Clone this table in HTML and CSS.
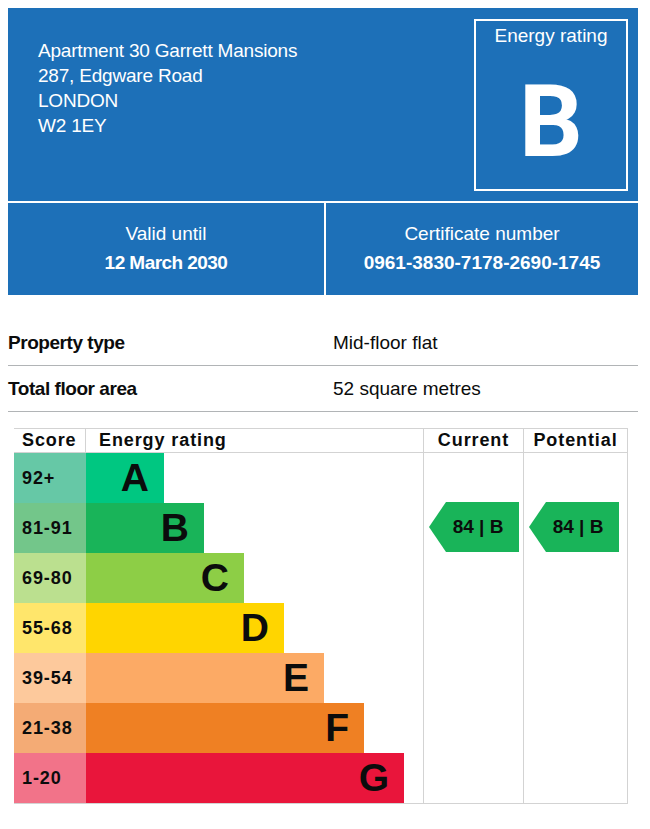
FILE: index.html
```html
<!DOCTYPE html>
<html lang="en">
<head>
<meta charset="utf-8">
<title>Energy performance certificate</title>
<link rel="stylesheet" href="styles.css">
</head>
<body>
<div class="page">
  <div class="summary">
    <div class="address">
      <div>Apartment 30 Garrett Mansions</div>
      <div>287, Edgware Road</div>
      <div>LONDON</div>
      <div>W2 1EY</div>
    </div>
    <div class="rating-box">
      <div class="rating-title">Energy rating</div>
      <div class="rating-letter">B</div>
    </div>
  </div>
  <div class="meta">
    <div class="meta-cell">
      <div class="meta-label">Valid until</div>
      <div class="meta-value date">12 March 2030</div>
    </div>
    <div class="meta-cell">
      <div class="meta-label">Certificate number</div>
      <div class="meta-value">0961-3830-7178-2690-1745</div>
    </div>
  </div>

  <dl class="props">
    <div class="prop-row">
      <dt>Property type</dt>
      <dd>Mid-floor flat</dd>
    </div>
    <div class="prop-row">
      <dt>Total floor area</dt>
      <dd>52 square metres</dd>
    </div>
  </dl>

  <div class="epc">
    <div class="epc-head">
      <div class="h h-score">Score</div>
      <div class="h h-rating">Energy rating</div>
      <div class="h h-cur">Current</div>
      <div class="h h-pot">Potential</div>
    </div>
    <div class="epc-body">
      <div class="bands">
        <div class="band band-a"><div class="score">92+</div><div class="bar" style="width:78px">A</div></div>
        <div class="band band-b"><div class="score">81-91</div><div class="bar" style="width:118px">B</div></div>
        <div class="band band-c"><div class="score">69-80</div><div class="bar" style="width:158px">C</div></div>
        <div class="band band-d"><div class="score">55-68</div><div class="bar" style="width:198px">D</div></div>
        <div class="band band-e"><div class="score">39-54</div><div class="bar" style="width:238px">E</div></div>
        <div class="band band-f"><div class="score">21-38</div><div class="bar" style="width:278px">F</div></div>
        <div class="band band-g"><div class="score">1-20</div><div class="bar" style="width:318px">G</div></div>
      </div>
      <div class="col col-cur">
        <div class="arrow row-b">84 | B</div>
      </div>
      <div class="col col-pot">
        <div class="arrow row-b">84 | B</div>
      </div>
    </div>
  </div>
</div>
</body>
</html>
```

FILE: styles.css
```css
* { box-sizing: border-box; }

html, body {
  margin: 0;
  padding: 0;
  background: #ffffff;
}

body {
  padding: 8px;
  font-family: "Liberation Sans", Arial, sans-serif;
  color: #0b0c0c;
}

.page {
  width: 630px;
}

/* ---------- summary header ---------- */
.summary {
  background: #1d70b8;
  color: #ffffff;
  height: 193px;
  display: flex;
  justify-content: space-between;
  align-items: flex-start;
  padding: 11px 10px 0 30px;
}

.address {
  margin-top: 19px;
  font-size: 19px;
  line-height: 25px;
  letter-spacing: -0.2px;
}

.rating-box {
  width: 154px;
  height: 172px;
  border: 2px solid #ffffff;
  display: flex;
  flex-direction: column;
  align-items: center;
}

.rating-title {
  margin-top: 2px;
  font-size: 19px;
  line-height: 25px;
}

.rating-letter {
  margin-top: 24px;
  font-family: Roboto, "Liberation Sans", sans-serif;
  font-weight: 700;
  font-size: 100px;
  line-height: 1;
}

/* ---------- meta row ---------- */
.meta {
  margin-top: 2px;
  display: flex;
  gap: 2px;
}

.meta-cell {
  background: #1d70b8;
  color: #ffffff;
  height: 92px;
  padding-top: 16px;
  text-align: center;
  font-size: 19px;
  line-height: 29px;
}

.meta-cell:first-child { width: 316px; }
.meta-cell:last-child { flex: 1; }

.meta-value {
  font-weight: 700;
}

.meta-value.date {
  letter-spacing: -0.55px;
}

/* ---------- property list ---------- */
.props {
  margin: 25px 0 0 0;
  padding: 0;
}

.prop-row {
  display: flex;
  padding: 10px 0;
  border-bottom: 1px solid #b1b4b6;
  font-size: 19px;
  line-height: 25px;
}

.prop-row dt {
  width: 325px;
  font-weight: 700;
  letter-spacing: -0.45px;
}

.prop-row dd {
  margin: 0;
}

/* ---------- EPC chart ---------- */
.epc {
  margin: 16px 0 0 6px;
  width: 614px;
  border-top: 1px solid #d3d3d3;
  border-right: 1px solid #d3d3d3;
  border-bottom: 1px solid #d3d3d3;
}

.epc-head {
  display: grid;
  grid-template-columns: 72px 338px 100px 103px;
  height: 24px;
  border-bottom: 1px solid #d3d3d3;
}

.h {
  font-weight: 700;
  font-size: 18px;
  letter-spacing: 0.9px;
  line-height: 23px;
  white-space: nowrap;
}

.h-score { padding-left: 8px; border-right: 1px solid #d3d3d3; }
.h-rating { padding-left: 13px; border-right: 1px solid #d3d3d3; }
.h-cur { text-align: center; border-right: 1px solid #d3d3d3; }
.h-pot { text-align: center; }

.epc-body {
  display: grid;
  grid-template-columns: 410px 100px 103px;
}

.bands {
  display: flex;
  flex-direction: column;
  border-right: 1px solid #d3d3d3;
}

.band {
  display: flex;
  height: 50px;
}

.score {
  width: 72px;
  padding-left: 8px;
  font-weight: 700;
  font-size: 18px;
  letter-spacing: 0.9px;
  line-height: 50px;
}

.bar {
  font-weight: 700;
  font-size: 39px;
  line-height: 50px;
  text-align: right;
  padding-right: 15px;
}

.band-a .score { background: #66c8a6; }
.band-a .bar   { background: #00c781; }
.band-b .score { background: #73c68a; }
.band-b .bar   { background: #19b459; }
.band-c .score { background: #bbe08f; }
.band-c .bar   { background: #8dce46; }
.band-d .score { background: #ffe66b; }
.band-d .bar   { background: #ffd500; }
.band-e .score { background: #fdc99c; }
.band-e .bar   { background: #fcaa65; }
.band-f .score { background: #f4ab75; }
.band-f .bar   { background: #ef8023; }
.band-g .score { background: #f27389; }
.band-g .bar   { background: #e9153b; }

.col {
  display: grid;
  grid-template-rows: repeat(7, 50px);
}

.col-cur { border-right: 1px solid #d3d3d3; }

.arrow {
  width: 90px;
  height: 50px;
  margin-left: 5px;
  margin-top: -1px;
  background: #19b459;
  clip-path: polygon(17px 0, 100% 0, 100% 100%, 17px 100%, 0 50%);
  display: flex;
  align-items: center;
  justify-content: center;
  padding-left: 8px;
  font-weight: 700;
  font-size: 19px;
  white-space: nowrap;
}

.arrow.row-b { grid-row: 2; }
```
